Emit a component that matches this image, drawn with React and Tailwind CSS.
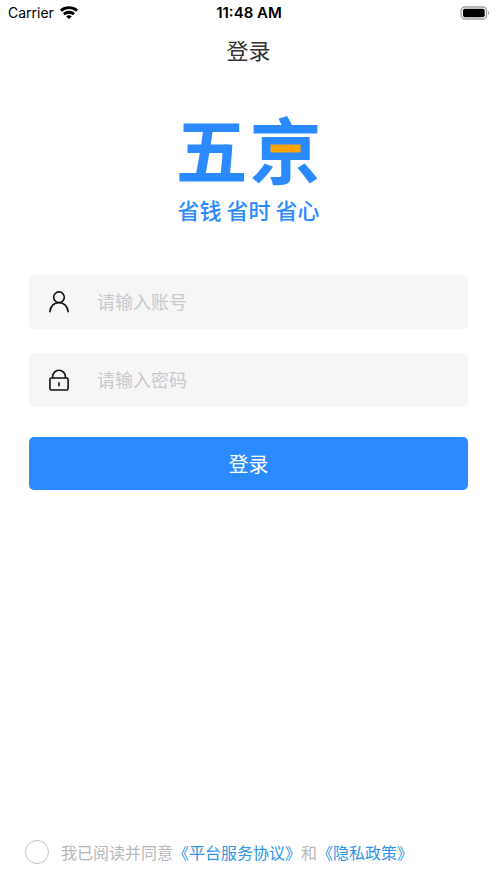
import React, { useState } from 'react';

const WifiIcon = () => (
  <svg className="w-[18px] h-[13px]" viewBox="0 0 18 13" fill="none" stroke="#000" strokeWidth="2.8" aria-hidden="true">
    <path d="M.9 4.6C5.4 .6 12.6 .6 17.1 4.6" />
    <path d="M3.9 8.1C6.7 5.6 11.3 5.6 14.1 8.1" />
    <path d="M9 13L6.2 10.4C7.8 9 10.2 9 11.8 10.4Z" fill="#000" stroke="none" />
  </svg>
);

const BatteryIcon = () => (
  <svg className="w-[30px] h-[14px]" viewBox="0 0 30 14" aria-hidden="true">
    <rect x="1.2" y="1" width="25.3" height="12" rx="3.6" fill="none" stroke="#a3a3a3" strokeWidth="1.3" />
    <rect x="3" y="2.8" width="21.7" height="8.4" rx="1.8" fill="#000" />
    <path d="M28 5v4c1.5-.5 1.5-3.5 0-4Z" fill="#a3a3a3" />
  </svg>
);

const UserIcon = () => (
  <svg className="w-5 h-[22px]" viewBox="0 0 20 22" fill="none" stroke="#111" strokeWidth="1.6" strokeLinecap="round" aria-hidden="true">
    <circle cx="10" cy="6.2" r="5.3" />
    <path d="M.9 20.8C1.3 15.4 5 11.6 10 11.6s8.7 3.8 9.1 9.2" />
  </svg>
);

const LockIcon = () => (
  <svg className="w-5 h-[22px]" viewBox="0 0 20 22" fill="none" stroke="#111" strokeWidth="1.6" aria-hidden="true">
    <path d="M3.6 9V7.6a6.4 6.4 0 0 1 12.8 0V9" />
    <rect x=".9" y="9" width="18.2" height="12" rx="1.6" />
    <path d="M10 13.2v4" />
  </svg>
);

const StatusBar = () => (
  <div className="grid grid-cols-3 items-center h-[25px] pl-2 pr-[7px] font-[Inter,sans-serif] text-sm text-black">
    <div className="flex items-center gap-[6px]">
      <span>Carrier</span>
      <WifiIcon />
    </div>
    <span className="text-center text-[15px] font-semibold">11:48 AM</span>
    <div className="flex justify-end">
      <BatteryIcon />
    </div>
  </div>
);

const Logo = () => (
  <div className="isolate flex flex-col items-center text-[#2b8aff]">
    <div className="flex gap-[2px] text-[72px] leading-[72px] font-bold">
      <span>五</span>
      <span className="relative">
        京
        {/* Orange accent behind the strokes of the second character */}
        <span className="absolute -z-10 left-[16px] top-[32px] w-[40px] h-[12px] bg-[#ffa508]"></span>
      </span>
    </div>
    <p className="mt-[10px] text-[22px] leading-8 font-medium">省钱 省时 省心</p>
  </div>
);

const Field = ({ id, label, icon, ...props }) => (
  <div className="flex items-center h-[54px] pl-5 rounded-[5px] bg-[#f6f6f7]">
    <label htmlFor={id} aria-label={label}>{icon}</label>
    <input
      id={id}
      aria-label={label}
      className="flex-1 min-w-0 h-full ml-7 pr-5 pb-[2px] bg-transparent text-lg text-gray-800 placeholder:text-[#c8c8ce] outline-none"
      {...props}
    />
  </div>
);

export default function App() {
  const [account, setAccount] = useState('');
  const [password, setPassword] = useState('');
  const [agreed, setAgreed] = useState(false);

  return (
    <div className="flex flex-col min-h-screen bg-white font-['Noto_Sans_CJK_SC',sans-serif]">
      <StatusBar />
      <h1 className="h-12 text-center text-[22px] leading-[48px] text-[#333]">登录</h1>

      <main className="flex flex-col flex-1 pt-[38px]">
        <Logo />

        <form className="flex flex-col gap-6 mt-[50px] px-[29px]" onSubmit={(e) => e.preventDefault()}>
          <Field
            id="account"
            label="账号"
            icon={<UserIcon />}
            type="text"
            placeholder="请输入账号"
            value={account}
            onChange={(e) => setAccount(e.target.value)}
          />
          <Field
            id="password"
            label="密码"
            icon={<LockIcon />}
            type="password"
            placeholder="请输入密码"
            value={password}
            onChange={(e) => setPassword(e.target.value)}
          />
          <button type="submit" className="h-[53px] mt-[6px] rounded-[5px] bg-[#2b8aff] text-xl text-white">
            登录
          </button>
        </form>

        {/* Agreement */}
        <div className="flex items-center gap-3 mt-auto pl-[25px] pb-[19px] text-base leading-6 text-[#b8b8b8]">
          <input
            id="agree"
            type="checkbox"
            checked={agreed}
            onChange={(e) => setAgreed(e.target.checked)}
            className="appearance-none shrink-0 w-6 h-6 rounded-full border border-[#c4c4c4] checked:bg-[#2b8aff]"
          />
          <p>
            <label htmlFor="agree">我已阅读并同意</label>
            <a href="#service" className="text-[#3095e8]">《平台服务协议》</a>
            和
            <a href="#privacy" className="text-[#3095e8]">《隐私政策》</a>
          </p>
        </div>
      </main>
    </div>
  );
}
